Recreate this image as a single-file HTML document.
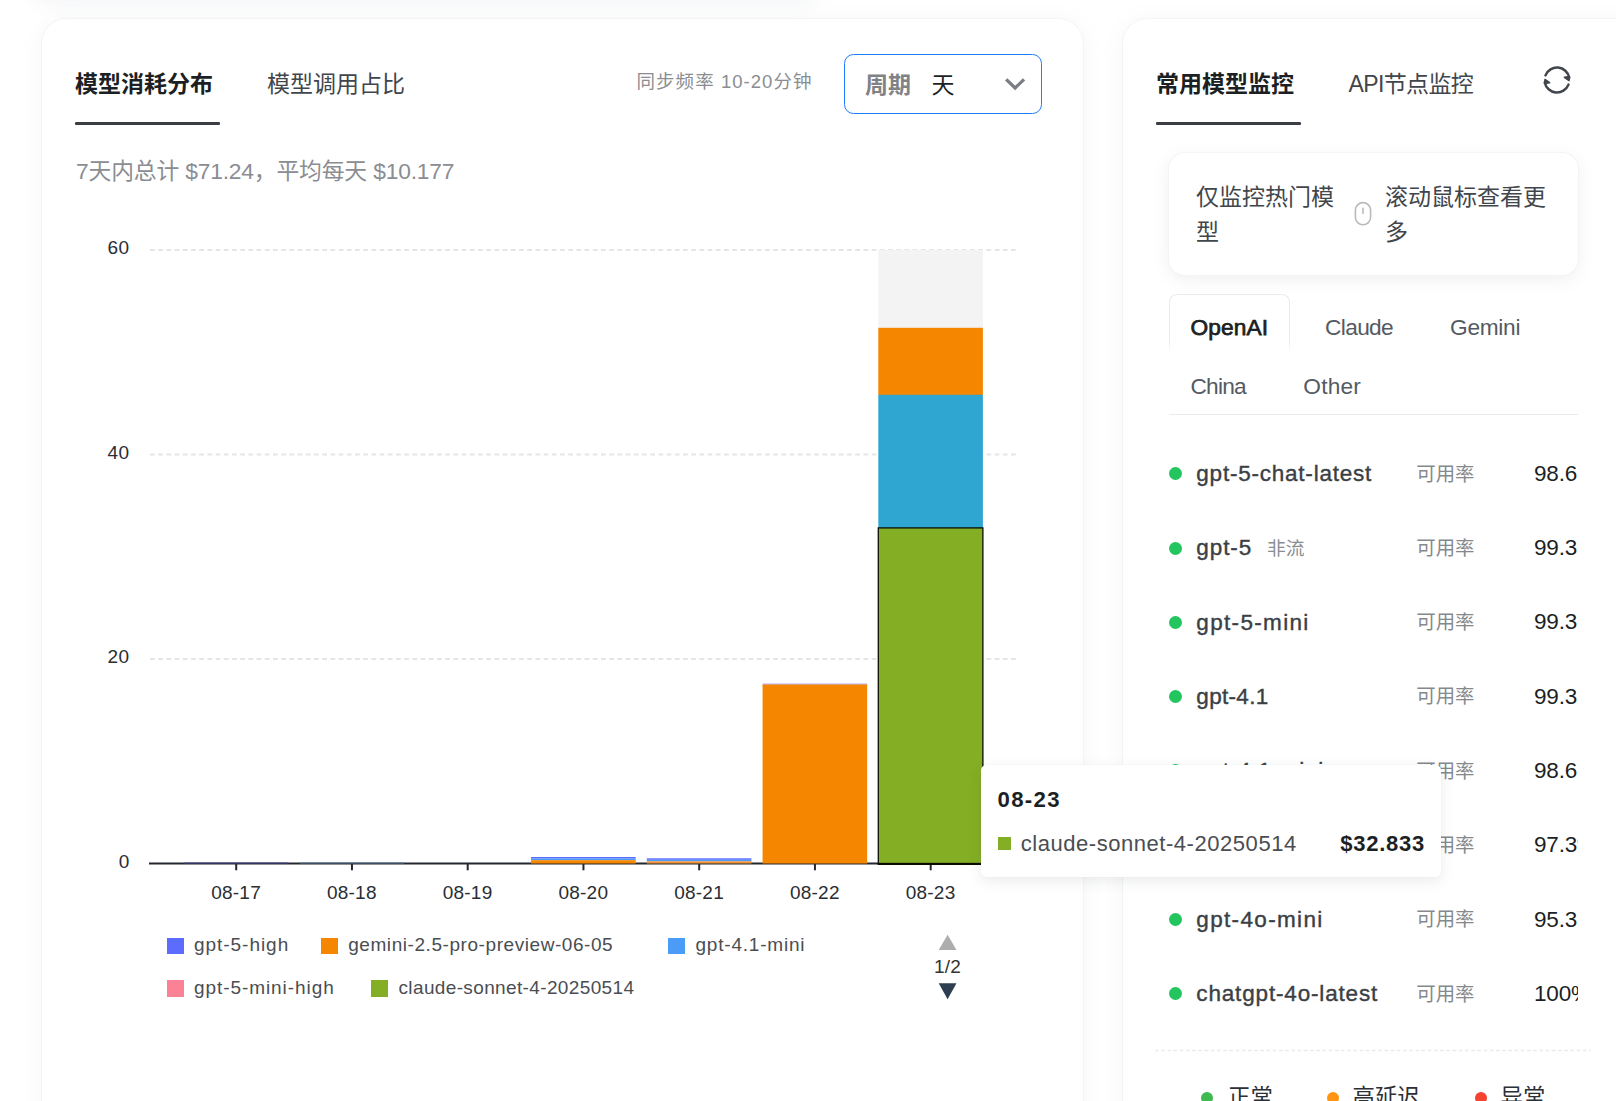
<!DOCTYPE html>
<html lang="zh-CN">
<head>
<meta charset="utf-8">
<title>模型消耗分布</title>
<style>
*{box-sizing:border-box;margin:0;padding:0}
html,body{width:1616px;height:1101px;overflow:hidden;background:#fff}
body{position:relative;font-family:"Liberation Sans","Noto Sans CJK SC",sans-serif;color:#1c1f23}
.abs{position:absolute;white-space:nowrap;line-height:1}
.card{position:absolute;background:#fff;border-radius:24.5px;box-shadow:0 0 0 1px #f3f4f6,0 2px 20px 2px rgba(120,130,150,.065)}
.topshadow{position:absolute;left:30px;top:-44px;width:790px;height:40px;border-radius:24px;box-shadow:0 4px 18px 3px rgba(120,130,150,.085)}
.uline{position:absolute;height:3.4px;background:#3b3f45;border-radius:1px}
.grid{position:absolute;left:150px;width:868px;height:1.6px;background:repeating-linear-gradient(90deg,#e2e4e8 0,#e2e4e8 4.8px,transparent 4.8px,transparent 8.2px)}
.tick{position:absolute;width:2px;height:6.6px;background:#23272e;top:863.6px}
.dot{position:absolute;width:13px;height:13px;border-radius:50%;background:#22c55e}
</style>
</head>
<body>
<div class="topshadow"></div>
<!-- LEFT CARD -->
<div class="card" style="left:42px;top:19px;width:1041.2px;height:1200px"></div>
<div class="abs" style="left:75.00px;top:72.73px;font-size:23px;color:#1c1f23;font-weight:700;">模型消耗分布</div>
<div class="uline" style="left:75px;top:121.7px;width:145px"></div>
<div class="abs" style="left:267.00px;top:72.73px;font-size:23px;color:#41464c;">模型调用占比</div>
<div class="abs" style="left:636.50px;top:72.84px;font-size:18.5px;color:#8a8d92;letter-spacing:1.049px;">同步频率 10-20分钟</div>
<div style="position:absolute;left:844px;top:54px;width:198px;height:60px;border:1.3px solid #1f7fff;border-radius:9.5px;background:#fff"></div>
<div class="abs" style="left:865.00px;top:74.13px;font-size:23px;color:#808285;font-weight:700;">周期</div>
<div class="abs" style="left:931.50px;top:74.13px;font-size:23px;color:#1c1f23;">天</div>
<svg style="position:absolute;left:1003px;top:74px" width="24" height="20" viewBox="0 0 24 20"><path d="M4.3 6.4 L12.1 14 L19.9 6.4" fill="none" stroke="#7b7d82" stroke-width="3.2" stroke-linecap="square" stroke-linejoin="miter"/></svg>
<div class="abs" style="left:76.00px;top:160.40px;font-size:22.8px;color:#8a8d92;letter-spacing:-0.173px;">7天内总计 $71.24，平均每天 $10.177</div>
<!-- CHART -->
<svg style="position:absolute;left:0;top:0" width="1100" height="900" viewBox="0 0 1100 900"><line x1="150" x2="1018" y1="250" y2="250" stroke="#e4e5e7" stroke-width="1.8" stroke-dasharray="4.8 3.4"/><line x1="150" x2="1018" y1="454.5" y2="454.5" stroke="#e4e5e7" stroke-width="1.8" stroke-dasharray="4.8 3.4"/><line x1="150" x2="1018" y1="659" y2="659" stroke="#e4e5e7" stroke-width="1.8" stroke-dasharray="4.8 3.4"/></svg>
<div class="abs" style="left:129.40px;top:238.42px;font-size:19px;color:#2a2d32;letter-spacing:0.366px;transform:translateX(-100%);">60</div>
<div class="abs" style="left:129.40px;top:442.92px;font-size:19px;color:#2a2d32;letter-spacing:0.366px;transform:translateX(-100%);">40</div>
<div class="abs" style="left:129.40px;top:647.42px;font-size:19px;color:#2a2d32;letter-spacing:0.366px;transform:translateX(-100%);">20</div>
<div class="abs" style="left:129.40px;top:852.02px;font-size:19px;color:#2a2d32;transform:translateX(-100%);">0</div>
<svg style="position:absolute;left:0;top:0" width="1100" height="900" viewBox="0 0 1100 900" shape-rendering="auto"><line x1="149" x2="985" y1="863.5" y2="863.5" stroke="#23272e" stroke-width="1.8"/><line x1="236.20" x2="236.20" y1="863.5" y2="870.3" stroke="#23272e" stroke-width="2"/><line x1="351.95" x2="351.95" y1="863.5" y2="870.3" stroke="#23272e" stroke-width="2"/><line x1="467.70" x2="467.70" y1="863.5" y2="870.3" stroke="#23272e" stroke-width="2"/><line x1="583.45" x2="583.45" y1="863.5" y2="870.3" stroke="#23272e" stroke-width="2"/><line x1="699.20" x2="699.20" y1="863.5" y2="870.3" stroke="#23272e" stroke-width="2"/><line x1="814.95" x2="814.95" y1="863.5" y2="870.3" stroke="#23272e" stroke-width="2"/><line x1="930.70" x2="930.70" y1="863.5" y2="870.3" stroke="#23272e" stroke-width="2"/><rect x="183.80" y="862.5" width="104.6" height="1.00" fill="#4a4890"/><rect x="299.55" y="862.5" width="104.6" height="1.00" fill="#5a7a96"/><rect x="531.05" y="857" width="104.6" height="1.60" fill="#5b6cff"/><rect x="531.05" y="858.6" width="104.6" height="1.60" fill="#4a9cf7"/><rect x="531.05" y="860.2" width="104.6" height="3.30" fill="#f58600"/><rect x="646.80" y="858.3" width="104.6" height="1.50" fill="#5b6cff"/><rect x="646.80" y="859.8" width="104.6" height="1.50" fill="#4a9cf7"/><rect x="646.80" y="861.3" width="104.6" height="2.20" fill="#f0913a"/><rect x="762.55" y="683.6" width="104.6" height="1.00" fill="#9f95e8"/><rect x="762.55" y="684.5" width="104.6" height="179.00" fill="#f58600"/><rect x="878.30" y="250" width="104.6" height="78.00" fill="#f3f3f3"/><rect x="878.30" y="327.8" width="104.6" height="67.20" fill="#f58600"/><rect x="878.30" y="394.8" width="104.6" height="133.20" fill="#2fa6d1"/><rect x="878.30" y="527.9" width="104.6" height="335.60" fill="#84ae24" stroke="#0a0d04" stroke-width="1.3"/><line x1="877.70" x2="983.50" y1="864.2" y2="864.2" stroke="#0a0d04" stroke-width="1.4"/></svg>
<div class="abs" style="left:236.10px;top:882.62px;font-size:19px;color:#2a2d32;letter-spacing:0.226px;transform:translateX(-50%);">08-17</div>
<div class="abs" style="left:351.85px;top:882.62px;font-size:19px;color:#2a2d32;letter-spacing:0.226px;transform:translateX(-50%);">08-18</div>
<div class="abs" style="left:467.60px;top:882.62px;font-size:19px;color:#2a2d32;letter-spacing:0.226px;transform:translateX(-50%);">08-19</div>
<div class="abs" style="left:583.35px;top:882.62px;font-size:19px;color:#2a2d32;letter-spacing:0.226px;transform:translateX(-50%);">08-20</div>
<div class="abs" style="left:699.10px;top:882.62px;font-size:19px;color:#2a2d32;letter-spacing:0.226px;transform:translateX(-50%);">08-21</div>
<div class="abs" style="left:814.85px;top:882.62px;font-size:19px;color:#2a2d32;letter-spacing:0.226px;transform:translateX(-50%);">08-22</div>
<div class="abs" style="left:930.60px;top:882.62px;font-size:19px;color:#2a2d32;letter-spacing:0.226px;transform:translateX(-50%);">08-23</div>
<div style="position:absolute;left:166.5px;top:937.6px;width:17px;height:16.4px;background:#5b6cff;"></div>
<div class="abs" style="left:194.00px;top:935.12px;font-size:19px;color:#4a4d52;letter-spacing:0.960px;">gpt-5-high</div>
<div style="position:absolute;left:320.7px;top:937.6px;width:17px;height:16.4px;background:#f58600;"></div>
<div class="abs" style="left:348.20px;top:935.12px;font-size:19px;color:#4a4d52;letter-spacing:0.566px;">gemini-2.5-pro-preview-06-05</div>
<div style="position:absolute;left:668px;top:937.6px;width:17px;height:16.4px;background:#4a9cf7;"></div>
<div class="abs" style="left:695.50px;top:935.12px;font-size:19px;color:#4a4d52;letter-spacing:0.789px;">gpt-4.1-mini</div>
<div style="position:absolute;left:166.5px;top:980.4px;width:17px;height:16.4px;background:#fb8195;"></div>
<div class="abs" style="left:194.00px;top:978.12px;font-size:19px;color:#4a4d52;letter-spacing:0.927px;">gpt-5-mini-high</div>
<div style="position:absolute;left:371px;top:980.4px;width:17px;height:16.4px;background:#84ae24;"></div>
<div class="abs" style="left:398.50px;top:978.12px;font-size:19px;color:#4a4d52;letter-spacing:0.364px;">claude-sonnet-4-20250514</div>
<svg style="position:absolute;left:936px;top:933px" width="24" height="70" viewBox="0 0 24 70"><path d="M11.6 1.7 L20.5 17 L2.7 17 Z" fill="#adadad"/><path d="M2.7 50.3 L20.5 50.3 L11.6 66.3 Z" fill="#2c3e50"/></svg>
<div class="abs" style="left:947.60px;top:956.52px;font-size:19px;color:#333;letter-spacing:0.194px;transform:translateX(-50%);">1/2</div>
<!-- RIGHT CARD -->
<div class="card" style="left:1122.6px;top:19px;width:700px;height:1200px"></div>
<div class="abs" style="left:1156.00px;top:73.13px;font-size:23px;color:#1c1f23;font-weight:700;">常用模型监控</div>
<div class="uline" style="left:1156px;top:121.7px;width:145px"></div>
<div class="abs" style="left:1348.50px;top:73.13px;font-size:23px;color:#41464c;letter-spacing:-0.629px;">API节点监控</div>
<svg style="position:absolute;left:1542.6px;top:66.4px" width="28" height="28" viewBox="0 0 28 28" fill="none" stroke="#41464c" stroke-width="2.5" stroke-linecap="round" stroke-linejoin="round">
<path d="M2.5 9.35 A12.4 12.4 0 0 1 26.2 11.6"/><path d="M25.5 18.65 A12.4 12.4 0 0 1 1.8 16.4"/>
<path d="M21.4 11.3 L26.5 10.5 L26.0 14.6 Z" fill="#41464c" stroke-width="1.5"/><path d="M6.6 16.7 L1.5 17.5 L2.0 13.4 Z" fill="#41464c" stroke-width="1.5"/>
</svg>
<div style="position:absolute;left:1169px;top:153px;width:409px;height:122px;border-radius:16px;background:#fff;box-shadow:0 0 0 1px #f3f4f6,0 4px 16px rgba(120,130,150,.13)"></div>
<div class="abs" style="left:1196px;top:180px;font-size:23px;line-height:35.1px;color:#41464c;white-space:normal;width:150px">仅监控热门模型</div>
<svg style="position:absolute;left:1354px;top:200.7px" width="18" height="27" viewBox="0 0 18 27" fill="none" stroke="#b8babd" stroke-width="1.6" stroke-linecap="round"><rect x="1.4" y="1.6" width="15.2" height="22.2" rx="7.6"/><path d="M9 7.4 V12.2"/></svg>
<div class="abs" style="left:1385px;top:180px;font-size:23px;line-height:35.1px;color:#41464c;white-space:normal;width:170px">滚动鼠标查看更多</div>
<div style="position:absolute;left:1169px;top:294px;width:121px;height:70px;border:1px solid #e9ebee;border-bottom:none;border-radius:8px 8px 0 0;background:#fff"></div>
<div style="position:absolute;left:1167px;top:340px;width:126px;height:26px;background:linear-gradient(rgba(255,255,255,0),#fff 50%)"></div>
<div class="abs" style="left:1190.50px;top:315.78px;font-size:22.7px;color:#1c1f23;letter-spacing:0.113px;-webkit-text-stroke:0.75px #1c1f23;">OpenAI</div>
<div class="abs" style="left:1325.00px;top:315.78px;font-size:22.7px;color:#555a61;letter-spacing:-0.639px;">Claude</div>
<div class="abs" style="left:1450.00px;top:315.78px;font-size:22.7px;color:#555a61;letter-spacing:-0.272px;">Gemini</div>
<div class="abs" style="left:1190.50px;top:375.08px;font-size:22.7px;color:#555a61;letter-spacing:-0.769px;">China</div>
<div class="abs" style="left:1303.30px;top:375.08px;font-size:22.7px;color:#555a61;letter-spacing:0.190px;">Other</div>
<div style="position:absolute;left:1169px;top:414px;width:409px;height:1px;background:#e9ebee;"></div>
<div style="position:absolute;left:1156px;top:430px;width:422px;height:610px;overflow:hidden">
<div class="dot" style="left:13.2px;top:37.2px"></div>
<div class="abs" style="left:40.30px;top:32.95px;font-size:22.5px;color:#3b3f45;letter-spacing:0.777px;-webkit-text-stroke:0.4px #3b3f45;">gpt-5-chat-latest</div>
<div class="abs" style="left:260.30px;top:34.58px;font-size:19.4px;color:#85888d;">可用率</div>
<div class="abs" style="left:378.00px;top:32.75px;font-size:22.5px;color:#1c1f23;letter-spacing:-0.197px;">98.6</div>
<div class="dot" style="left:13.2px;top:111.5px"></div>
<div class="abs" style="left:40.30px;top:107.25px;font-size:22.5px;color:#3b3f45;letter-spacing:0.929px;-webkit-text-stroke:0.4px #3b3f45;">gpt-5</div>
<div class="abs" style="left:111.00px;top:109.97px;font-size:18.7px;color:#8a8d92;">非流</div>
<div class="abs" style="left:260.30px;top:108.88px;font-size:19.4px;color:#85888d;">可用率</div>
<div class="abs" style="left:378.00px;top:107.05px;font-size:22.5px;color:#1c1f23;letter-spacing:-0.197px;">99.3</div>
<div class="dot" style="left:13.2px;top:185.8px"></div>
<div class="abs" style="left:40.30px;top:181.55px;font-size:22.5px;color:#3b3f45;letter-spacing:1.330px;-webkit-text-stroke:0.4px #3b3f45;">gpt-5-mini</div>
<div class="abs" style="left:260.30px;top:183.18px;font-size:19.4px;color:#85888d;">可用率</div>
<div class="abs" style="left:378.00px;top:181.35px;font-size:22.5px;color:#1c1f23;letter-spacing:-0.197px;">99.3</div>
<div class="dot" style="left:13.2px;top:260.1px"></div>
<div class="abs" style="left:40.30px;top:255.85px;font-size:22.5px;color:#3b3f45;letter-spacing:0.325px;-webkit-text-stroke:0.4px #3b3f45;">gpt-4.1</div>
<div class="abs" style="left:260.30px;top:257.48px;font-size:19.4px;color:#85888d;">可用率</div>
<div class="abs" style="left:378.00px;top:255.65px;font-size:22.5px;color:#1c1f23;letter-spacing:-0.197px;">99.3</div>
<div class="dot" style="left:13.2px;top:334.4px"></div>
<div class="abs" style="left:40.30px;top:330.15px;font-size:22.5px;color:#3b3f45;letter-spacing:0.746px;-webkit-text-stroke:0.4px #3b3f45;">gpt-4.1-mini</div>
<div class="abs" style="left:260.30px;top:331.78px;font-size:19.4px;color:#85888d;">可用率</div>
<div class="abs" style="left:378.00px;top:329.95px;font-size:22.5px;color:#1c1f23;letter-spacing:-0.197px;">98.6</div>
<div class="dot" style="left:13.2px;top:408.7px"></div>
<div class="abs" style="left:40.30px;top:404.45px;font-size:22.5px;color:#3b3f45;letter-spacing:0.840px;-webkit-text-stroke:0.4px #3b3f45;">gpt-4o</div>
<div class="abs" style="left:260.30px;top:406.08px;font-size:19.4px;color:#85888d;">可用率</div>
<div class="abs" style="left:378.00px;top:404.25px;font-size:22.5px;color:#1c1f23;letter-spacing:-0.197px;">97.3%</div>
<div class="dot" style="left:13.2px;top:483.0px"></div>
<div class="abs" style="left:40.30px;top:478.75px;font-size:22.5px;color:#3b3f45;letter-spacing:1.346px;-webkit-text-stroke:0.4px #3b3f45;">gpt-4o-mini</div>
<div class="abs" style="left:260.30px;top:480.38px;font-size:19.4px;color:#85888d;">可用率</div>
<div class="abs" style="left:378.00px;top:478.55px;font-size:22.5px;color:#1c1f23;letter-spacing:-0.197px;">95.3</div>
<div class="dot" style="left:13.2px;top:557.3px"></div>
<div class="abs" style="left:40.30px;top:553.05px;font-size:22.5px;color:#3b3f45;letter-spacing:0.838px;-webkit-text-stroke:0.4px #3b3f45;">chatgpt-4o-latest</div>
<div class="abs" style="left:260.30px;top:554.68px;font-size:19.4px;color:#85888d;">可用率</div>
<div class="abs" style="left:378.00px;top:552.85px;font-size:22.5px;color:#1c1f23;letter-spacing:-0.197px;">100%</div>
</div>
<svg style="position:absolute;left:1150px;top:1040px" width="466" height="20" viewBox="0 0 466 20"><line x1="5" x2="441" y1="10.4" y2="10.4" stroke="#eaebee" stroke-width="1.5" stroke-dasharray="3.6 2.6"/></svg>
<div class="dot" style="left:1201.0px;top:1091.6px;width:12px;height:12px;background:#3fb950"></div>
<div class="abs" style="left:1228.00px;top:1087.34px;font-size:22.4px;color:#2b2f36;">正常</div>
<div class="dot" style="left:1326.6px;top:1091.6px;width:12px;height:12px;background:#ff9512"></div>
<div class="abs" style="left:1352.50px;top:1087.34px;font-size:22.4px;color:#2b2f36;">高延迟</div>
<div class="dot" style="left:1474.5px;top:1091.6px;width:12px;height:12px;background:#f5432f"></div>
<div class="abs" style="left:1500.50px;top:1087.34px;font-size:22.4px;color:#2b2f36;">异常</div>
<!-- TOOLTIP -->
<div style="position:absolute;left:981px;top:764.8px;width:460px;height:111.8px;border-radius:5.5px;background:#fff;box-shadow:0 4px 14px rgba(50,60,80,.10),0 0 2px rgba(50,60,80,.06)"></div>
<div class="abs" style="left:997.50px;top:788.91px;font-size:22.2px;color:#1c1f23;font-weight:700;letter-spacing:1.313px;">08-23</div>
<div style="position:absolute;left:998px;top:837.4px;width:13px;height:12.8px;background:#84ae24;"></div>
<div class="abs" style="left:1020.70px;top:832.88px;font-size:22px;color:#4a4d52;letter-spacing:0.544px;">claude-sonnet-4-20250514</div>
<div class="abs" style="left:1340.20px;top:832.58px;font-size:22px;color:#1c1f23;font-weight:700;letter-spacing:0.746px;">$32.833</div>
</body>
</html>
